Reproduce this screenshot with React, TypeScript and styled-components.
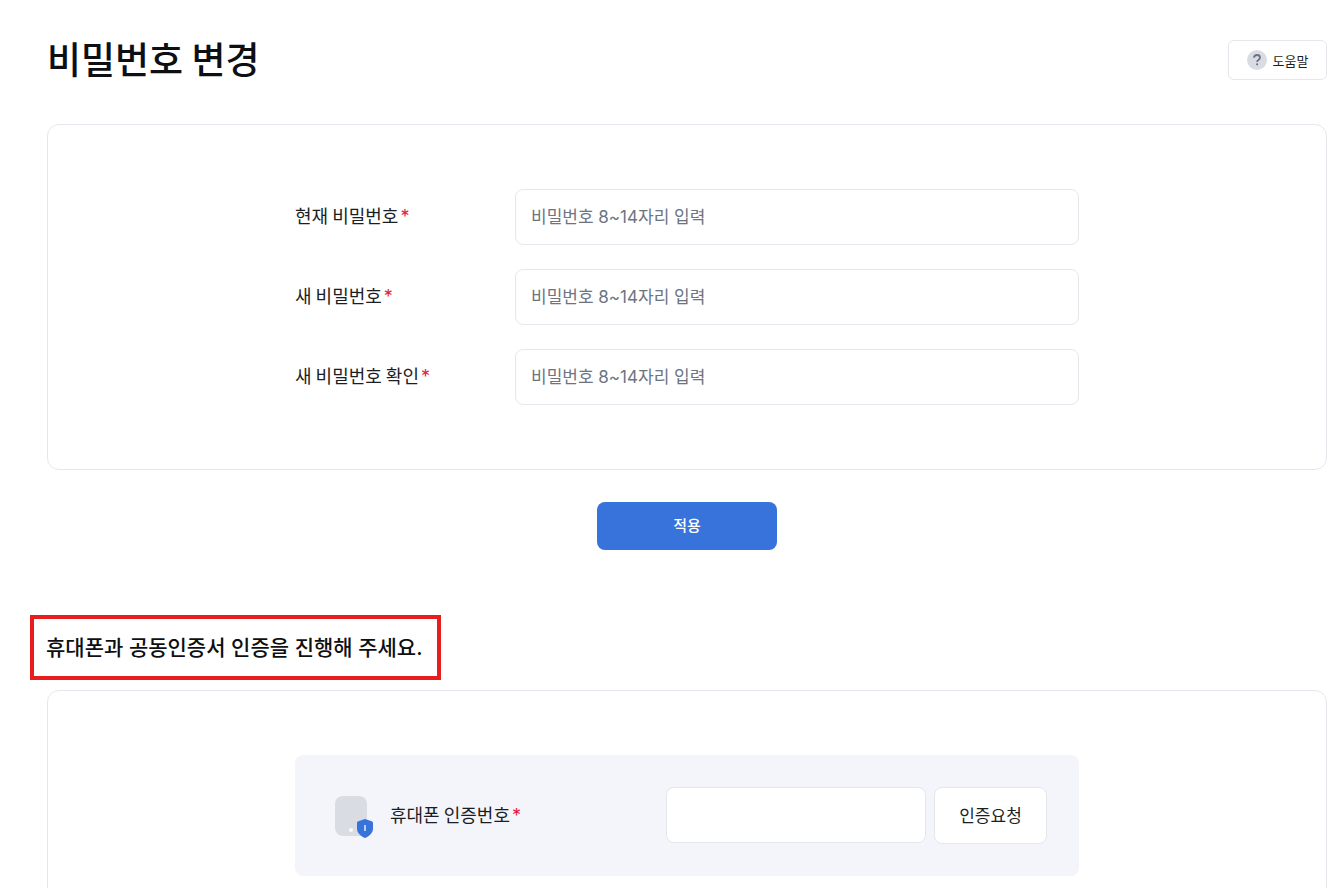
import { useState } from "react";
import type { FormEvent } from "react";
import styled, { createGlobalStyle } from "styled-components";

const color = {
  ink: "#0d0f12",
  text: "#1b1e23",
  muted: "#6c7482",
  line: "#e6e7ed",
  panel: "#f4f5fa",
  icon: "#d9dce3",
  primary: "#3773da",
  required: "#e5193b",
  highlight: "#e81d1d",
};

const GlobalStyle = createGlobalStyle`
  *, *::before, *::after {
    box-sizing: border-box;
  }
  body {
    margin: 0;
    background: #fff;
    color: ${color.text};
    font-family: "Noto Sans CJK KR", "Noto Sans", sans-serif;
  }
  button {
    font-family: inherit;
  }
`;

const Page = styled.main`
  padding: 32px 15px 0 47px;
  height: 100vh;
  overflow-x: hidden;
  overflow-y: auto;
  scrollbar-width: none;
`;

const Header = styled.header`
  display: flex;
  align-items: center;
  justify-content: space-between;
  height: 56px;
`;

const Title = styled.h1`
  margin: 0;
  padding-bottom: 4px;
  color: ${color.ink};
  font-size: 37px;
  font-weight: 500;
  line-height: 52px;
`;

const Button = styled.button<{ $size: "small" | "medium" | "large"; $primary?: boolean }>`
  display: flex;
  align-items: center;
  justify-content: center;
  gap: 6px;
  flex-shrink: 0;
  width: ${({ $size }) => ({ small: "99px", medium: "180px", large: "113px" })[$size]};
  height: ${({ $size }) => ({ small: "40px", medium: "48px", large: "57px" })[$size]};
  padding: 0 0 ${({ $size }) => ({ small: "0", medium: "4px", large: "2px" })[$size]};
  border: ${({ $primary }) => ($primary ? "0" : `1px solid ${color.line}`)};
  border-radius: ${({ $size }) => ($size === "small" ? "6px" : "8px")};
  background: ${({ $primary }) => ($primary ? color.primary : "#fff")};
  color: ${({ $primary }) => ($primary ? "#fff" : color.text)};
  font-size: ${({ $size }) => ({ small: "13px", medium: "15px", large: "17px" })[$size]};
  font-weight: ${({ $primary }) => ($primary ? 500 : 400)};
  cursor: pointer;
`;

const Card = styled.section`
  display: flex;
  justify-content: center;
  padding: 64px 24px;
  border: 1px solid ${color.line};
  border-radius: 12px;
`;

const PasswordForm = styled.form`
  display: flex;
  flex-direction: column;
  align-items: center;
  gap: 32px;
  margin-top: 36px;

  & > ${Card} {
    width: 100%;
  }
`;

const Fields = styled.div`
  display: flex;
  flex-direction: column;
  gap: 24px;
  width: 100%;
  max-width: 784px;
`;

const Row = styled.div`
  display: flex;
  align-items: center;
`;

const Label = styled.label`
  flex: 0 0 220px;
  padding-bottom: 2px;
  font-size: 18px;
  line-height: 28px;
`;

const Required = styled.span`
  margin-left: 2px;
  color: ${color.required};
  font-family: Inter, sans-serif;
`;

const Input = styled.input`
  flex: 1;
  min-width: 0;
  height: 56px;
  padding: 0 15px;
  border: 1px solid ${color.line};
  border-radius: 8px;
  background: #fff;
  color: ${color.text};
  font-family: Inter, "Noto Sans CJK KR", sans-serif;
  font-size: 17px;

  &::placeholder {
    color: ${color.muted};
    opacity: 1;
  }
`;

const Notice = styled.h2`
  width: fit-content;
  margin: 65px 0 10px -17px;
  padding: 12px 14px 12px 12px;
  border: 4px solid ${color.highlight};
  color: ${color.ink};
  font-family: Inter, "Noto Sans CJK KR", sans-serif;
  font-size: 21px;
  font-weight: 500;
  line-height: 33px;
`;

const VerifyPanel = styled.form`
  display: flex;
  align-items: center;
  width: 100%;
  max-width: 784px;
  padding: 32px 32px 32px 40px;
  border-radius: 8px;
  background: ${color.panel};
`;

const VerifyLabel = styled.label`
  flex: 1;
  margin-left: 15px;
  padding-bottom: 2px;
  font-size: 18px;
  line-height: 28px;
`;

const CodeGroup = styled.div`
  display: flex;
  align-items: flex-start;
  gap: 8px;
  width: 381px;
`;

const HelpIcon = () => (
  <svg width="20" height="20" viewBox="0 0 20 20" fill="none" aria-hidden="true">
    <circle cx="10" cy="10" r="10" fill={color.icon} />
    <path
      d="M7 7.7C7.1 5.9 8.3 5 10 5s3 1 3 2.5c0 1.200-.7 1.800-1.600 2.400-.9.600-1.300 1-1.300 2"
      stroke={color.muted}
      strokeWidth="1.800"
    />
    <circle cx="10.100" cy="14.300" r="1.100" fill={color.muted} />
  </svg>
);

const PhoneShieldIcon = () => (
  <svg width="40" height="44" viewBox="0 0 40 44" fill="none" aria-hidden="true">
    <rect x="0" y="2" width="32" height="40" rx="8" fill={color.icon} />
    <circle cx="16" cy="36" r="2" fill="#f8f9fb" />
    <path
      d="M30 25l6.700 2.300c.8.300 1.300.9 1.300 1.700v5.200c0 4.600-3.200 7.600-8 9.800-4.800-2.200-8-5.200-8-9.800V29c0-.8.500-1.400 1.300-1.700L30 25z"
      fill={color.primary}
    />
    <path d="M30 31v6" stroke="#b9cff3" strokeWidth="2" />
  </svg>
);

const fields = [
  { id: "current", label: "현재 비밀번호", autoComplete: "current-password" },
  { id: "next", label: "새 비밀번호", autoComplete: "new-password" },
  { id: "confirm", label: "새 비밀번호 확인", autoComplete: "new-password" },
];

export default function App() {
  const [values, setValues] = useState<Record<string, string>>({});
  const [code, setCode] = useState("");
  const stop = (event: FormEvent) => event.preventDefault();

  return (
    <>
      <GlobalStyle />
      <Page>
        <Header>
          <Title>비밀번호 변경</Title>
          <Button type="button" $size="small">
            <HelpIcon />
            도움말
          </Button>
        </Header>

        <PasswordForm onSubmit={stop}>
          <Card>
            <Fields>
              {fields.map(({ id, label, autoComplete }) => (
                <Row key={id}>
                  <Label htmlFor={id}>
                    {label}
                    <Required>*</Required>
                  </Label>
                  <Input
                    id={id}
                    type="password"
                    required
                    autoComplete={autoComplete}
                    placeholder="비밀번호 8~14자리 입력"
                    value={values[id] ?? ""}
                    onChange={(e) => setValues({ ...values, [id]: e.target.value })}
                  />
                </Row>
              ))}
            </Fields>
          </Card>
          <Button type="submit" $size="medium" $primary>
            적용
          </Button>
        </PasswordForm>

        <Notice>휴대폰과 공동인증서 인증을 진행해 주세요.</Notice>

        <Card>
          <VerifyPanel onSubmit={stop}>
            <PhoneShieldIcon />
            <VerifyLabel htmlFor="code">
              휴대폰 인증번호
              <Required>*</Required>
            </VerifyLabel>
            <CodeGroup>
              <Input
                id="code"
                inputMode="numeric"
                required
                value={code}
                onChange={(e) => setCode(e.target.value)}
              />
              <Button type="button" $size="large">
                인증요청
              </Button>
            </CodeGroup>
          </VerifyPanel>
        </Card>
      </Page>
    </>
  );
}
